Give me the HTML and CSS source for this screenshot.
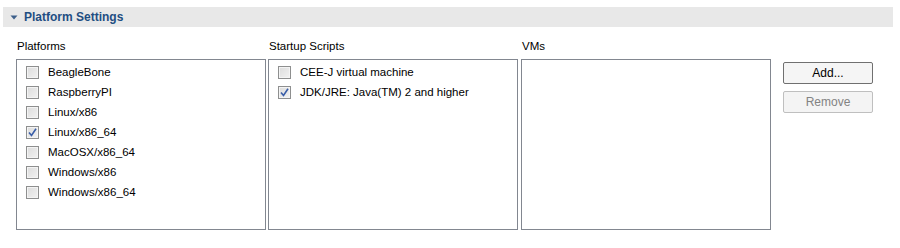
FILE: index.html
```html
<!DOCTYPE html>
<html>
<head>
<meta charset="utf-8">
<link rel="stylesheet" href="styles.css">
</head>
<body>
<div class="section">
  <div class="header">
    <svg class="twisty" width="8" height="5" viewBox="0 0 8 5"><path d="M0.5 0.5 H7.5 L4 4.5 Z" fill="#3d5f8a"/></svg>
    <span class="title">Platform Settings</span>
  </div>
  <div class="body">
    <div class="col col1">
      <div class="label">Platforms</div>
      <div class="list">
        <div class="item"><span class="cb"></span>BeagleBone</div>
        <div class="item"><span class="cb"></span>RaspberryPI</div>
        <div class="item"><span class="cb"></span>Linux/x86</div>
        <div class="item"><span class="cb checked"><svg width="9" height="9" viewBox="0 0 9 9"><path d="M1 4.5 L3.5 7.5 L8 0.8" fill="none" stroke="#3a5ea8" stroke-width="1.6"/></svg></span>Linux/x86_64</div>
        <div class="item"><span class="cb"></span>MacOSX/x86_64</div>
        <div class="item"><span class="cb"></span>Windows/x86</div>
        <div class="item"><span class="cb"></span>Windows/x86_64</div>
      </div>
    </div>
    <div class="col col2">
      <div class="label">Startup Scripts</div>
      <div class="list">
        <div class="item"><span class="cb"></span>CEE-J virtual machine</div>
        <div class="item"><span class="cb checked"><svg width="9" height="9" viewBox="0 0 9 9"><path d="M1 4.5 L3.5 7.5 L8 0.8" fill="none" stroke="#3a5ea8" stroke-width="1.6"/></svg></span>JDK/JRE: Java(TM) 2 and higher</div>
      </div>
    </div>
    <div class="col col3">
      <div class="label">VMs</div>
      <div class="list"></div>
    </div>
    <div class="buttons">
      <button class="btn">Add...</button>
      <button class="btn disabled">Remove</button>
    </div>
  </div>
</div>
</body>
</html>
```
FILE: styles.css
```css
html, body {
  margin: 0;
  padding: 0;
  background: #ffffff;
}
body {
  font-family: "Liberation Sans", Arial, sans-serif;
  font-size: 12px;
  color: #000000;
}
.section {
  padding: 7px 7px 0 3px;
}
.header {
  height: 20px;
  background: #e8e8e8;
  display: flex;
  align-items: center;
  padding-left: 7px;
}
.twisty {
  display: block;
  margin-right: 6px;
}
.title {
  font-weight: bold;
  font-size: 12px;
  color: #1f4e82;
}
.body {
  display: flex;
  padding-left: 13px;
  padding-top: 12px;
}
.col {
  width: 250px;
  display: flex;
  flex-direction: column;
}
.col1 {
  margin-right: 2px;
}
.col2 {
  margin-right: 3px;
}
.label {
  height: 20px;
  line-height: 14px;
  padding-left: 1px;
  font-size: 11.5px;
}
.list {
  box-sizing: border-box;
  height: 171px;
  border: 1px solid #828790;
  padding-top: 2px;
}
.item {
  height: 20px;
  display: flex;
  align-items: center;
  padding-left: 9px;
  font-size: 11.5px;
}
.cb {
  box-sizing: border-box;
  width: 13px;
  height: 13px;
  border: 1px solid #8e8f8f;
  background: linear-gradient(135deg, #dcdcdc 0%, #f2f2f2 100%);
  box-shadow: inset 0 0 0 1px #f4f4f4;
  margin-right: 9px;
  display: flex;
  align-items: center;
  justify-content: center;
  flex-shrink: 0;
}
.cb svg {
  display: block;
}
.buttons {
  display: flex;
  flex-direction: column;
  margin-left: 12px;
  padding-top: 23px;
}
.btn {
  box-sizing: border-box;
  width: 90px;
  height: 22px;
  margin-bottom: 7px;
  border: 1px solid #707070;
  border-radius: 2px;
  background: #f5f5f5;
  font-family: "Liberation Sans", Arial, sans-serif;
  font-size: 12px;
  color: #000;
  padding: 0;
}
.btn.disabled {
  border-color: #bfbfbf;
  background: #f4f4f4;
  color: #838383;
}
```
